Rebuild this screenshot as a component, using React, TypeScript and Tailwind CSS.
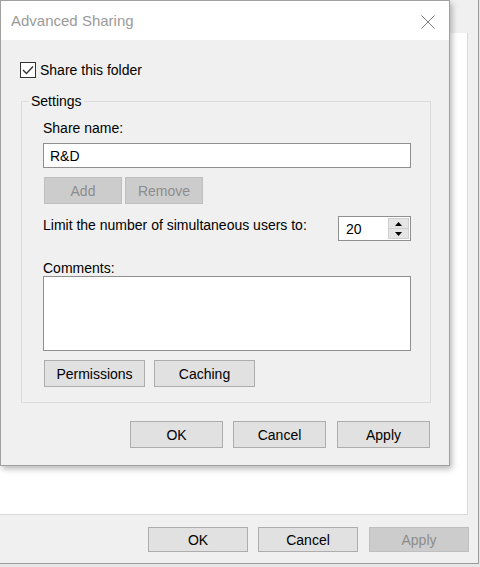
import { ReactNode } from 'react';

function WinButton({
  children,
  className = '',
  disabled = false,
}: {
  children: ReactNode;
  className?: string;
  disabled?: boolean;
}) {
  return (
    <button
      type="button"
      disabled={disabled}
      className={`flex items-center justify-center border text-[14px] leading-[16px] ${
        disabled
          ? 'bg-[#cccccc] border-[#bfbfbf] text-[#8c8c8c]'
          : 'bg-[#e1e1e1] border-[#adadad] text-black'
      } ${className}`}
    >
      {children}
    </button>
  );
}

function SpinBox() {
  return (
    <div className="flex w-[73px] h-[25px] border border-[#8f8f8f] bg-white">
      <span className="flex-1 flex items-center pl-[7px]">20</span>
      <div className="w-[21px] my-[1px] mr-[1px] flex flex-col bg-[#e5e5e5] border border-[#cfcfcf]">
        <div className="flex-1 flex items-center justify-center border-b border-[#cfcfcf]">
          <svg width="7" height="4" viewBox="0 0 7 4">
            <polygon points="3.5,0 7,4 0,4" fill="#000" />
          </svg>
        </div>
        <div className="flex-1 flex items-center justify-center">
          <svg width="7" height="4" viewBox="0 0 7 4">
            <polygon points="0,0 7,0 3.5,4" fill="#000" />
          </svg>
        </div>
      </div>
    </div>
  );
}

export default function App() {
  return (
    <div className="relative w-[480px] h-[567px] overflow-hidden bg-[#e6e6e6] font-['Liberation_Sans',Arial,sans-serif] text-[14px] leading-[16px] text-black">
      {/* window behind (folder properties) */}
      <div className="w-[479px] h-[564px] flex flex-col bg-[#f0f0f0] border-r border-b border-[#9c9c9c]">
        <div className="h-[33px]" />
        <div className="w-[468px] h-[482px] bg-white border-r border-b border-[#dadada]" />
        <div className="flex-1 flex justify-end gap-[10px] pt-[12px] pr-[9px]">
          <WinButton className="w-[100px] h-[25px]">OK</WinButton>
          <WinButton className="w-[100px] h-[25px]">Cancel</WinButton>
          <WinButton disabled className="w-[100px] h-[25px] ml-[1px]">
            Apply
          </WinButton>
        </div>
      </div>

      {/* Advanced Sharing dialog */}
      <div className="absolute left-0 top-0 w-[450px] h-[466px] flex flex-col bg-[#f0f0f0] border border-[#a0a0a0] shadow-[2px_3px_6px_rgba(0,0,0,0.28)]">
        <div className="h-[39px] shrink-0 bg-white flex items-center justify-between pl-[10px] pr-[14px]">
          <span className="text-[15px] leading-[18px] text-[#9a9a9a]">Advanced Sharing</span>
          <svg width="14" height="14" viewBox="0 0 14 14" className="mt-[2px]">
            <path d="M0.5 0.5 L13.5 13.5 M13.5 0.5 L0.5 13.5" stroke="#7a7a7a" strokeWidth="1" fill="none" />
          </svg>
        </div>

        <div className="flex-1 flex flex-col pl-[19px] pt-[22px]">
          <label className="flex items-center gap-[4px] h-[16px]">
            <span className="w-[16px] h-[16px] border border-[#333] bg-white flex items-center justify-center">
              <svg width="12" height="10" viewBox="0 0 12 10">
                <path d="M1 5 L4.5 8.5 L11 1.5" stroke="#333" strokeWidth="1.4" fill="none" />
              </svg>
            </span>
            <span>Share this folder</span>
          </label>

          <fieldset className="mt-[15px] ml-[1px] w-[410px] border border-[#dcdcdc] pl-[7px] pt-[11px] pb-[15px]">
            <legend className="px-[2px]">Settings</legend>
            <div className="ml-[14px] w-[368px] flex flex-col">
              <span>Share name:</span>
              <div className="mt-[7px] h-[25px] border border-[#8f8f8f] bg-white flex items-center pl-[6px]">
                R&amp;D
              </div>
              <div className="mt-[9px] flex gap-[3px] ml-[1px]">
                <WinButton disabled className="w-[78px] h-[27px]">
                  Add
                </WinButton>
                <WinButton disabled className="w-[78px] h-[27px]">
                  Remove
                </WinButton>
              </div>
              <div className="mt-[12px] flex items-start justify-between">
                <span className="mt-[1px]">Limit the number of simultaneous users to:</span>
                <SpinBox />
              </div>
              <span className="mt-[19px]">Comments:</span>
              <div className="h-[75px] border border-[#8f8f8f] bg-white" />
              <div className="mt-[9px] flex gap-[9px] ml-[1px]">
                <WinButton className="w-[101px] h-[27px]">Permissions</WinButton>
                <WinButton className="w-[101px] h-[27px]">Caching</WinButton>
              </div>
            </div>
          </fieldset>

          <div className="mt-[18px] w-[410px] flex justify-end gap-[10px]">
            <WinButton className="w-[93px] h-[27px]">OK</WinButton>
            <WinButton className="w-[93px] h-[27px]">Cancel</WinButton>
            <WinButton className="w-[93px] h-[27px] ml-[1px]">Apply</WinButton>
          </div>
        </div>
      </div>
    </div>
  );
}
